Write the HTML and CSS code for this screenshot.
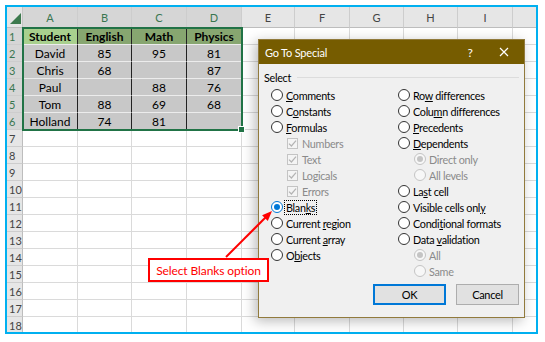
FILE: index.html
```html
<!DOCTYPE html>
<html>
<head>
<meta charset="utf-8">
<link rel="stylesheet" href="styles.css">
</head>
<body>
<div class="page">
  <div class="frame">
    <div class="sheet">
      <div class="corner"><span class="tri"></span></div>
      <div class="ch s">A</div><div class="ch s">B</div><div class="ch s">C</div><div class="ch s">D</div><div class="ch">E</div><div class="ch">F</div><div class="ch">G</div><div class="ch">H</div><div class="ch">I</div><div class="ch"></div>

      <div class="rh s">1</div><div class="t ha">Student</div><div class="t h">English</div><div class="t h">Math</div><div class="t h">Physics</div><div></div><div></div><div></div><div></div><div></div><div></div>
      <div class="rh s">2</div><div class="t">David</div><div class="t">85</div><div class="t">95</div><div class="t">81</div><div></div><div></div><div></div><div></div><div></div><div></div>
      <div class="rh s">3</div><div class="t">Chris</div><div class="t">68</div><div class="t"></div><div class="t">87</div><div></div><div></div><div></div><div></div><div></div><div></div>
      <div class="rh s">4</div><div class="t">Paul</div><div class="t"></div><div class="t">88</div><div class="t">76</div><div></div><div></div><div></div><div></div><div></div><div></div>
      <div class="rh s">5</div><div class="t">Tom</div><div class="t">88</div><div class="t">69</div><div class="t">68</div><div></div><div></div><div></div><div></div><div></div><div></div>
      <div class="rh s">6</div><div class="t">Holland</div><div class="t">74</div><div class="t">81</div><div class="t"></div><div></div><div></div><div></div><div></div><div></div><div></div>
      <div class="rh">7</div><div></div><div></div><div></div><div></div><div></div><div></div><div></div><div></div><div></div><div></div>
      <div class="rh">8</div><div></div><div></div><div></div><div></div><div></div><div></div><div></div><div></div><div></div><div></div>
      <div class="rh">9</div><div></div><div></div><div></div><div></div><div></div><div></div><div></div><div></div><div></div><div></div>
      <div class="rh">10</div><div></div><div></div><div></div><div></div><div></div><div></div><div></div><div></div><div></div><div></div>
      <div class="rh">11</div><div></div><div></div><div></div><div></div><div></div><div></div><div></div><div></div><div></div><div></div>
      <div class="rh">12</div><div></div><div></div><div></div><div></div><div></div><div></div><div></div><div></div><div></div><div></div>
      <div class="rh">13</div><div></div><div></div><div></div><div></div><div></div><div></div><div></div><div></div><div></div><div></div>
      <div class="rh">14</div><div></div><div></div><div></div><div></div><div></div><div></div><div></div><div></div><div></div><div></div>
      <div class="rh">15</div><div></div><div></div><div></div><div></div><div></div><div></div><div></div><div></div><div></div><div></div>
      <div class="rh">16</div><div></div><div></div><div></div><div></div><div></div><div></div><div></div><div></div><div></div><div></div>
      <div class="rh">17</div><div></div><div></div><div></div><div></div><div></div><div></div><div></div><div></div><div></div><div></div>
      <div class="rh">18</div><div></div><div></div><div></div><div></div><div></div><div></div><div></div><div></div><div></div><div></div>
    </div>
    <div class="selbox"></div>
    <div class="handle"></div>
  </div>

  <div class="dialog">
    <div class="titlebar">
      <span class="title">Go To Special</span>
      <span class="help">?</span>
      <span class="close"><svg width="10" height="10" viewBox="0 0 10 10"><path d="M1 1L9 9M9 1L1 9" stroke="#fff" stroke-width="1.2" fill="none"/></svg></span>
    </div>
    <div class="body">
      <div class="legend"><span>Select</span><span class="line"></span></div>
      <div class="opts">
        <div class="col">
          <div class="opt"><span class="radio"></span><span><u>C</u>omments</span></div>
          <div class="opt"><span class="radio"></span><span>C<u>o</u>nstants</span></div>
          <div class="opt"><span class="radio"></span><span><u>F</u>ormulas</span></div>
          <div class="opt sub dis"><span class="chk"><svg width="9" height="9" viewBox="0 0 9 9"><path d="M1 4.6L3.4 7L8 1.6" fill="none" stroke="#b3b3b3" stroke-width="1.2"/></svg></span><span>Numbers</span></div>
          <div class="opt sub dis"><span class="chk"><svg width="9" height="9" viewBox="0 0 9 9"><path d="M1 4.6L3.4 7L8 1.6" fill="none" stroke="#b3b3b3" stroke-width="1.2"/></svg></span><span>Text</span></div>
          <div class="opt sub dis"><span class="chk"><svg width="9" height="9" viewBox="0 0 9 9"><path d="M1 4.6L3.4 7L8 1.6" fill="none" stroke="#b3b3b3" stroke-width="1.2"/></svg></span><span>Logicals</span></div>
          <div class="opt sub dis"><span class="chk"><svg width="9" height="9" viewBox="0 0 9 9"><path d="M1 4.6L3.4 7L8 1.6" fill="none" stroke="#b3b3b3" stroke-width="1.2"/></svg></span><span>Errors</span></div>
          <div class="opt"><span class="radio on"></span><span class="focus">Blan<u>k</u>s</span></div>
          <div class="opt"><span class="radio"></span><span>Current <u>r</u>egion</span></div>
          <div class="opt"><span class="radio"></span><span>Current <u>a</u>rray</span></div>
          <div class="opt"><span class="radio"></span><span>O<u>b</u>jects</span></div>
        </div>
        <div class="col">
          <div class="opt"><span class="radio"></span><span>Ro<u>w</u> differences</span></div>
          <div class="opt"><span class="radio"></span><span>Colu<u>m</u>n differences</span></div>
          <div class="opt"><span class="radio"></span><span><u>P</u>recedents</span></div>
          <div class="opt"><span class="radio"></span><span><u>D</u>ependents</span></div>
          <div class="opt sub dis"><span class="radio dis on"></span><span>Direct only</span></div>
          <div class="opt sub dis"><span class="radio dis"></span><span>All levels</span></div>
          <div class="opt"><span class="radio"></span><span>La<u>s</u>t cell</span></div>
          <div class="opt"><span class="radio"></span><span>Visible cells onl<u>y</u></span></div>
          <div class="opt"><span class="radio"></span><span>Condi<u>t</u>ional formats</span></div>
          <div class="opt"><span class="radio"></span><span>Data <u>v</u>alidation</span></div>
          <div class="opt sub dis"><span class="radio dis on"></span><span>All</span></div>
          <div class="opt sub dis"><span class="radio dis"></span><span>Same</span></div>
        </div>
      </div>
      <div class="btns">
        <div class="btn def ok">OK</div>
        <div class="btn cancel">Cancel</div>
      </div>
    </div>
  </div>

  <div class="callout">Select Blanks option</div>
  <svg class="arrow" width="545" height="342" viewBox="0 0 545 342">
    <line x1="226" y1="257" x2="265.5" y2="217.5" stroke="#ff0000" stroke-width="2"/>
    <polygon points="272,211 267.8,220.9 262.1,215.3" fill="#ff0000"/>
  </svg>
</div>
</body>
</html>
```

FILE: styles.css
```css
* { box-sizing: border-box; }
body { margin: 0; background: #fff; }
.page { position: relative; width: 545px; height: 342px; overflow: hidden; background: #fff; }

.frame {
  position: relative;
  margin: 5px 0 0 5px;
  width: 533px;
  height: 329px;
  border: 2px solid #00b0f0;
  overflow: hidden;
  background: #fff;
}
.sheet {
  display: grid;
  grid-template-columns: 16px 55px 54px 55px 55px 53px 55px 54px 54px 55px 60px;
  grid-template-rows: 21px repeat(18, 17px);
  font-family: Lato, "Open Sans", sans-serif;
  font-size: 12px;
  color: #000;
}
.sheet > div {
  border-right: 1px solid #dadada;
  border-bottom: 1px solid #dadada;
  display: flex;
  align-items: center;
  justify-content: center;
  overflow: hidden;
  white-space: nowrap;
}
.sheet > .corner {
  background: #e6e6e6;
  border-right: 1px solid #c4c4c4;
  border-bottom: 1px solid #bdbdbd;
  justify-content: flex-end;
  align-items: flex-end;
  padding: 0 1px 3px 0;
}
.tri {
  width: 0; height: 0;
  border-left: 11px solid transparent;
  border-bottom: 11px solid #3d7a4e;
}
.sheet > .ch {
  background: #e6e6e6;
  color: #444;
  font-size: 11px;
  border-right: 1px solid #cdcdcd;
  border-bottom: 1px solid #bdbdbd;
}
.sheet > .ch.s { background: #d6d6d6; color: #3a7650; }
.sheet > .rh {
  background: #e6e6e6;
  color: #444;
  font-size: 11px;
  justify-content: flex-start;
  padding-left: 2px;
  border-right: 1px solid #bdbdbd;
  border-bottom: 1px solid #cdcdcd;
}
.sheet > .rh.s { background: #d6d6d6; color: #3a7650; }
.sheet > .t {
  background: #c8c8c8;
  border-right: 1px solid #222;
  border-bottom: 1px solid #ececec;
}
.sheet > .h { background: #87a670; font-weight: 700; }
.sheet > .ha { background: #a9d08e; font-weight: 700; }

.selbox {
  position: absolute;
  left: 15px; top: 20px;
  width: 221px; height: 104px;
  border: 2px solid #217346;
}
.handle {
  position: absolute;
  left: 231px; top: 119px;
  width: 7px; height: 7px;
  background: #217346;
  border: 1px solid #fff;
}

.dialog {
  position: absolute;
  left: 258px; top: 39px;
  width: 267px; height: 279px;
  border: 1px solid #917a3c;
  background: #f0f0f0;
  box-shadow: -3px 3px 12px rgba(0,0,0,0.28);
  display: flex;
  flex-direction: column;
  font-family: Lato, "Open Sans", sans-serif;
  font-size: 10.8px;
  letter-spacing: -0.3px;
  color: #000;
  z-index: 2;
}
.titlebar {
  height: 24px;
  background: #765c00;
  color: #fff;
  display: flex;
  align-items: center;
  padding-left: 6px;
  font-size: 11px;
  letter-spacing: -0.2px;
}
.title { flex: 1; }
.help { width: 38px; text-align: center; font-size: 12px; }
.close { width: 30px; margin-right: 5px; display: flex; justify-content: center; align-items: center; }

.body { flex: 1; display: flex; flex-direction: column; padding: 5px 5px 12px 5px; }
.legend { display: flex; align-items: center; height: 16px; }
.legend .line { flex: 1; height: 1px; background: #dcdcdc; margin-left: 6px; }

.opts { display: grid; grid-template-columns: 127px 1fr; margin: 2px 0 0 7px; }
.col { display: flex; flex-direction: column; }
.opt { height: 16px; display: flex; align-items: center; white-space: nowrap; }
.opt.sub { padding-left: 16px; }
.opt.dis { color: #8a8a8a; }
.opt u { text-decoration-thickness: 1px; text-underline-offset: 1px; }

.radio {
  width: 12px; height: 12px;
  border-radius: 50%;
  border: 1px solid #333;
  background: #fff;
  margin-right: 3px;
  flex: none;
  display: flex; align-items: center; justify-content: center;
}
.radio.on { border-color: #0078d7; }
.radio.on::after { content: ""; width: 6px; height: 6px; border-radius: 50%; background: #0078d7; }
.radio.dis { border-color: #c4c4c4; background: #f7f7f7; }
.radio.dis.on::after { background: #c4c4c4; }
.chk {
  width: 11px; height: 11px;
  border: 1px solid #c4c4c4;
  background: #f4f4f4;
  margin-right: 4px;
  flex: none;
  display: flex; align-items: center; justify-content: center;
}
.focus { outline: 1px dotted #000; outline-offset: 0; padding: 0 1px; margin-left: -1px; }

.btns { margin-top: auto; display: flex; justify-content: flex-end; gap: 10px; }
.btn {
  height: 21px;
  border: 1px solid #adadad;
  background: #e1e1e1;
  display: flex; align-items: center; justify-content: center;
  font-size: 11px;
}
.btn.def { border-color: #0078d7; box-shadow: inset 0 0 0 1px #0078d7; }
.ok { width: 73px; }
.cancel { width: 63px; }

.callout {
  position: absolute;
  left: 148px; top: 258px;
  width: 121px; height: 24px;
  border: 2px solid #ff0000;
  background: #fff;
  color: #ff0000;
  font-family: Lato, "Open Sans", sans-serif;
  font-size: 12px;
  letter-spacing: -0.1px;
  display: flex; align-items: center; justify-content: center;
  z-index: 3;
}
.arrow { position: absolute; left: 0; top: 0; z-index: 4; pointer-events: none; }
```
